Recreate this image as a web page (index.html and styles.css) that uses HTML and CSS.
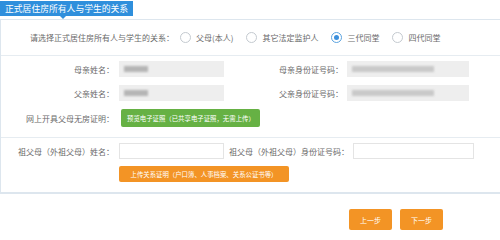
FILE: index.html
```html
<!DOCTYPE html>
<html lang="zh-CN">
  <head>
    <meta charset="UTF-8" />
    <meta name="viewport" content="width=device-width, initial-scale=1.0" />
    <title>正式居住房所有人与学生的关系</title>
    <link rel="stylesheet" href="styles.css">
  </head>
  <body>
    <div class="tab">正式居住房所有人与学生的关系</div>
    <div class="panel">
      <div class="relation">
        <span class="relation-label">请选择正式居住房所有人与学生的关系：</span>
        <label class="radio"><span class="dot"></span>父母(本人)</label>
        <label class="radio"><span class="dot"></span>其它法定监护人</label>
        <label class="radio"><span class="dot checked"></span>三代同堂</label>
        <label class="radio"><span class="dot"></span>四代同堂</label>
      </div>

      <div class="section parents">
        <div class="row">
          <span class="label">母亲姓名：</span>
          <div class="field filled"><span class="mask short"></span></div>
          <span class="label">母亲身份证号码：</span>
          <div class="field filled wide"><span class="mask long"></span></div>
        </div>
        <div class="row">
          <span class="label">父亲姓名：</span>
          <div class="field filled"><span class="mask short"></span></div>
          <span class="label">父亲身份证号码：</span>
          <div class="field filled wide"><span class="mask long"></span></div>
        </div>
        <div class="row">
          <span class="label">网上开具父母无房证明：</span>
          <button class="btn green">预览电子证照（已共享电子证照，无需上传）</button>
        </div>
      </div>

      <div class="section grand">
        <div class="row">
          <span class="label">祖父母（外祖父母）姓名：</span>
          <input class="field" type="text" />
          <span class="label">祖父母（外祖父母）身份证号码：</span>
          <input class="field wide" type="text" />
        </div>
        <div class="row">
          <span class="label"></span>
          <button class="btn orange">上传关系证明（户口簿、人事档案、关系公证书等）</button>
        </div>
      </div>
    </div>

    <div class="footer">
      <button class="step">上一步</button>
      <button class="step">下一步</button>
    </div>
  </body>
</html>
```

FILE: styles.css
```css
body {
  margin: 0;
  background-color: white;
  font-family: "Noto Sans CJK SC", "Noto Sans", sans-serif;
  font-size: 8px;
  color: #6a6a6a;
}
.tab {
  position: relative;
  display: inline-block;
  margin-top: 1px;
  height: 15px;
  line-height: 15px;
  padding: 0 5px;
  background-color: #2f8fdc;
  color: white;
  font-size: 8.8px;
}
.tab::after {
  content: "";
  position: absolute;
  left: 60px;
  bottom: -3px;
  border-left: 3px solid transparent;
  border-right: 3px solid transparent;
  border-top: 3px solid #2f8fdc;
}
.panel {
  margin-top: 3px;
  border: 1px solid #dde6ee;
  border-right: none;
  border-bottom: 2px solid #dde6ee;
}
.relation {
  display: flex;
  align-items: center;
  height: 35px;
  padding-left: 29px;
  border-bottom: 1px solid #e6ecf1;
}
.relation-label {
  margin-right: 6px;
}
.radio {
  display: flex;
  align-items: center;
  gap: 5px;
  margin-right: 13px;
}
.dot {
  width: 9px;
  height: 9px;
  border: 1px solid #c4cad0;
  border-radius: 50%;
  display: flex;
  align-items: center;
  justify-content: center;
}
.dot.checked {
  border-color: #5aa3e0;
}
.dot.checked::before {
  content: "";
  width: 5px;
  height: 5px;
  border-radius: 50%;
  background-color: #3a8fdc;
}
.section {
  display: flex;
  flex-direction: column;
  padding: 5px 0 10px;
}
.parents {
  gap: 8px;
  border-bottom: 1px solid #e6ecf1;
}
.grand {
  gap: 7px;
}
.row {
  display: grid;
  align-items: center;
}
.parents .row {
  grid-template-columns: 113px 110px 119px 126px;
}
.grand .row {
  grid-template-columns: 113px 110px 125px 125px;
}
.label {
  text-align: right;
  white-space: nowrap;
}
.field {
  height: 16px;
  box-sizing: border-box;
  border: 1px solid #e4e4e4;
  background-color: white;
  margin: 0 0 0 5px;
  width: 105px;
  padding: 0;
}
.field.wide {
  margin-left: 4px;
  width: 122px;
}
.grand .field.wide {
  width: 121px;
}
.field.filled {
  border: none;
  background-color: #eeeeee;
  display: flex;
  align-items: center;
  padding-left: 5px;
}
.mask {
  height: 6px;
  background-color: #b5b5b5;
  filter: blur(1px);
}
.mask.short {
  width: 24px;
}
.mask.long {
  width: 82px;
  background-color: #c9c9c9;
}
.btn {
  grid-column: 2 / 5;
  justify-self: start;
  margin-left: 5px;
  border: none;
  border-radius: 2px;
  color: white;
  font-family: "Noto Sans CJK SC", sans-serif;
  font-size: 6.4px;
  padding: 0 6px;
  cursor: pointer;
}
.green {
  height: 18px;
  width: 139px;
  margin-left: 7px;
  background-color: #66b144;
}
.orange {
  height: 16px;
  width: 170px;
  background-color: #f39425;
}
.footer {
  display: flex;
  justify-content: flex-end;
  gap: 8px;
  padding: 15px 57px 0 0;
}
.step {
  width: 43px;
  height: 21px;
  border: none;
  border-radius: 2px;
  background-color: #f39425;
  color: white;
  font-family: "Noto Sans CJK SC", sans-serif;
  font-size: 7px;
  cursor: pointer;
}
```
